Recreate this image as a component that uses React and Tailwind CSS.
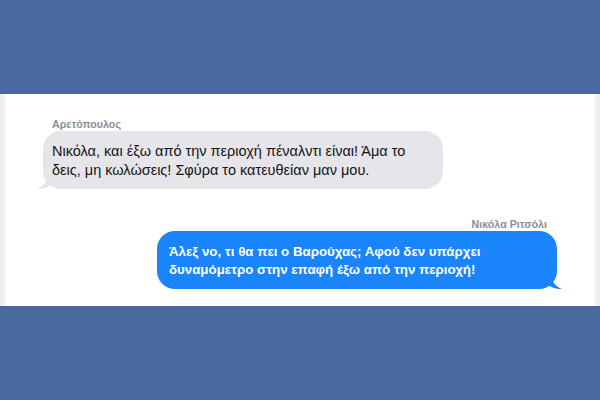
import React from "react";

function Bubble({ name, lines, mine }) {
  return (
    <div className={`flex flex-col ${mine ? "items-end" : "items-start"}`}>
      <span
        className={`text-[10.7px] leading-[12px] font-bold text-[#8e8e93] ${
          mine ? "mr-[10px]" : "ml-[9px]"
        }`}
      >
        {name}
      </span>
      <div className="relative mt-[1px]">
        <div
          className={`relative z-10 w-[400px] h-[58px] rounded-[18px] ${
            mine
              ? "bg-[#1a84fb] text-white font-bold text-[13.3px] leading-[18px] pt-[12px] pl-[12px]"
              : "bg-[#e5e5ea] text-[#151515] text-[14.5px] leading-[19px] pt-[11px] pl-[9px]"
          }`}
        >
          {lines.map((l) => (
            <div key={l} className="whitespace-nowrap">
              {l}
            </div>
          ))}
        </div>
        {mine ? (
          <svg
            className="absolute -right-[5px] bottom-0 z-0"
            width="20"
            height="20"
            viewBox="0 0 20 20"
          >
            <path d="M0 0 H8 C8 10 12 17 20 20 C13 20 9 18 6 16 C4 18 2 19 0 19 Z" fill="#1a84fb" />
          </svg>
        ) : (
          <svg
            className="absolute -left-[6px] bottom-0 z-0"
            width="20"
            height="20"
            viewBox="0 0 20 20"
          >
            <path d="M20 0 H12 C12 10 8 17 0 20 C7 20 11 18 14 16 C16 18 18 19 20 19 Z" fill="#e5e5ea" />
          </svg>
        )}
      </div>
    </div>
  );
}

export default function App() {
  return (
    <div
      className="w-[600px] h-[400px] bg-[#4a68a0] flex flex-col"
      style={{ fontFamily: '"Liberation Sans", "DejaVu Sans", sans-serif' }}
    >
      <div className="h-[94px]" />
      <div className="h-[212px] bg-white border-l-[5px] border-r-[5px] border-[#efeff1] flex flex-col pt-[24px]">
        <div className="ml-[38px] self-start">
          <Bubble
            name="Αρετόπουλος"
            lines={[
              "Νικόλα, και έξω από την περιοχή πέναλντι είναι! Άμα το",
              "δεις, μη κωλώσεις! Σφύρα το κατευθείαν μαν μου.",
            ]}
          />
        </div>
        <div className="mt-[29px] mr-[38px] self-end">
          <Bubble
            mine
            name="Νικόλα Ριτσόλι"
            lines={[
              "Άλεξ νο, τι θα πει ο Βαρούχας; Αφού δεν υπάρχει",
              "δυναμόμετρο στην επαφή έξω από την περιοχή!",
            ]}
          />
        </div>
      </div>
      <div className="flex-1" />
    </div>
  );
}
